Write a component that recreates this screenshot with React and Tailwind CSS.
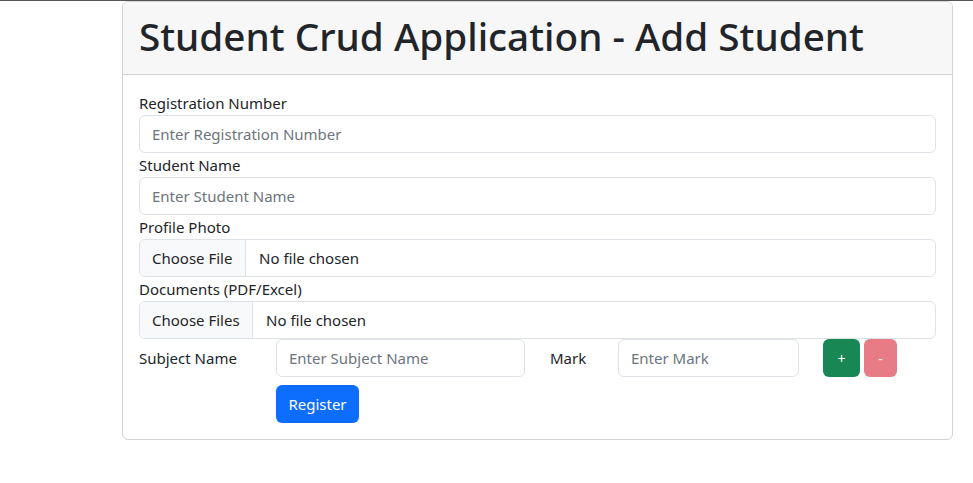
export default function App() {
  const label = "block text-[15px] leading-[24px] text-[#212529]";
  const input =
    "block w-full h-[38px] rounded-[6px] border border-[#dee2e6] bg-white px-[12px] text-[15px] text-[#212529] placeholder:text-[#6c757d] outline-none";
  return (
    <div className="min-h-[483px] bg-white font-['Noto_Sans',sans-serif]">
      <div className="h-px bg-[#555555]" />
      <div className="flex">
        <div className="w-[122px] shrink-0" />
        <div className="w-[831px] rounded-[6px] border border-[#d3d3d3] bg-white">
          <div className="h-[73px] rounded-t-[5px] border-b border-[#d3d3d3] bg-[#f7f7f7] px-[16px] pt-[10px]">
            <h1 className="text-[38.7px] font-medium leading-[48px] text-[#212529]">
              Student Crud Application - Add Student
            </h1>
          </div>
          <div className="px-[16px] pt-[16px] pb-[16px]">
            <label className={label}>Registration Number</label>
            <input className={input} placeholder="Enter Registration Number" />
            <label className={label}>Student Name</label>
            <input className={input} placeholder="Enter Student Name" />
            <label className={label}>Profile Photo</label>
            <div className="flex h-[38px] items-stretch overflow-hidden rounded-[6px] border border-[#dee2e6] text-[15px] text-[#212529]">
              <div className="flex w-[106px] shrink-0 items-center whitespace-nowrap border-r border-[#dee2e6] bg-[#f8f9fa] px-[12px]">
                Choose File
              </div>
              <div className="flex items-center whitespace-nowrap pl-[13px]">No file chosen</div>
            </div>
            <label className={label}>Documents (PDF/Excel)</label>
            <div className="flex h-[38px] items-stretch overflow-hidden rounded-[6px] border border-[#dee2e6] text-[15px] text-[#212529]">
              <div className="flex w-[113px] shrink-0 items-center whitespace-nowrap border-r border-[#dee2e6] bg-[#f8f9fa] px-[12px]">
                Choose Files
              </div>
              <div className="flex items-center whitespace-nowrap pl-[13px]">No file chosen</div>
            </div>
            <div className="flex h-[38px] items-center">
              <div className="w-[137px] shrink-0 text-[15px] text-[#212529]">Subject Name</div>
              <div className="w-[249px] shrink-0">
                <input className={input} placeholder="Enter Subject Name" />
              </div>
              <div className="w-[25px] shrink-0" />
              <div className="w-[68px] shrink-0 text-[15px] text-[#212529]">Mark</div>
              <div className="w-[181px] shrink-0">
                <input className={input} placeholder="Enter Mark" />
              </div>
              <div className="w-[24px] shrink-0" />
              <div className="flex gap-[4px]">
                <button className="flex h-[38px] w-[37px] items-center justify-center rounded-[6px] bg-[#198754] text-[14px] text-white">
                  +
                </button>
                <button className="flex h-[38px] w-[33px] items-center justify-center rounded-[6px] bg-[#e87c86] text-[14px] text-white">
                  -
                </button>
              </div>
            </div>
            <div className="mt-[8px] pl-[137px]">
              <button className="h-[38px] w-[83px] rounded-[6px] bg-[#0d6efd] text-[15px] text-white">
                Register
              </button>
            </div>
          </div>
        </div>
      </div>
    </div>
  );
}
